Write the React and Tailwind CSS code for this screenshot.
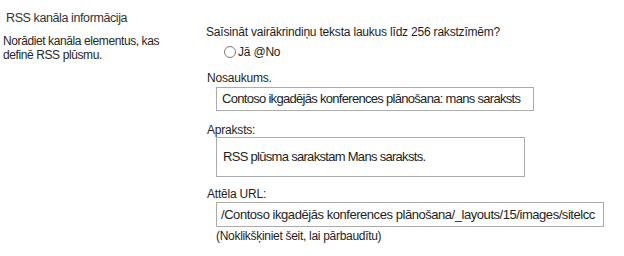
import React from 'react';

const font = { fontFamily: '"Liberation Sans", Arial, sans-serif' };

export default function App() {
  return (
    <div className="w-[624px] h-[256px] bg-white flex text-[#1e1e1e] overflow-hidden" style={font}>
      {/* left: section title + help */}
      <div className="w-[205px] shrink-0">
        <div className="mt-[10px] ml-[6px] text-[12.5px] leading-[16px] tracking-[-0.4px] text-[#333]">
          RSS kanāla informācija
        </div>
        <p className="mt-[8px] ml-[3px] w-[170px] text-[12px] leading-[14px] tracking-[-0.4px] text-[#262626]">
          Norādiet kanāla elementus, kas definē RSS plūsmu.
        </p>
      </div>

      {/* right: fields */}
      <div className="flex-1 flex flex-col">
        <div className="mt-[24px] ml-[1px] text-[12px] leading-[16px] tracking-[-0.2px] whitespace-nowrap">
          Saīsināt vairākrindiņu teksta laukus līdz 256 rakstzīmēm?
        </div>
        <label className="mt-[4px] ml-[19px] flex items-center gap-[2px] text-[12px] leading-[16px] tracking-[-0.2px]">
          <span className="w-[12px] h-[12px] rounded-full border border-[#7a7a7a] bg-white" />
          <span>Jā @No</span>
        </label>

        <div className="mt-[11px] ml-[2px] text-[12px] leading-[14px] tracking-[-0.2px]">Nosaukums.</div>
        <div className="mt-[2px] ml-[11px] w-[318px] h-[24px] border border-[#ababab] flex items-center pl-[5px] overflow-hidden">
          <span className="text-[13px] tracking-[-0.7px] whitespace-nowrap">
            Contoso ikgadējās konferences plānošana: mans saraksts
          </span>
        </div>

        <div className="mt-[13px] ml-[2px] text-[12px] leading-[13px] tracking-[-0.2px]">Apraksts:</div>
        <div className="ml-[11px] w-[309px] h-[40px] border border-[#ababab] pl-[6px] pt-[6px]">
          <span className="text-[13px] leading-[16px] tracking-[-0.7px] whitespace-nowrap">
            RSS plūsma sarakstam Mans saraksts.
          </span>
        </div>

        <div className="mt-[9px] ml-[2px] text-[12px] leading-[16px] tracking-[-0.2px]">Attēla URL:</div>
        <div className="ml-[11px] w-[388px] h-[25px] border border-[#ababab] flex items-center pl-[4px] overflow-hidden">
          <span className="text-[13px] tracking-[-0.45px] whitespace-nowrap">
            /Contoso ikgadējās konferences plānošana/_layouts/15/images/sitelcc
          </span>
        </div>
        <div className="mt-[1px] ml-[11px] text-[12px] leading-[16px] tracking-[-0.3px]">
          (Noklikšķiniet šeit, lai pārbaudītu)
        </div>
      </div>
    </div>
  );
}
